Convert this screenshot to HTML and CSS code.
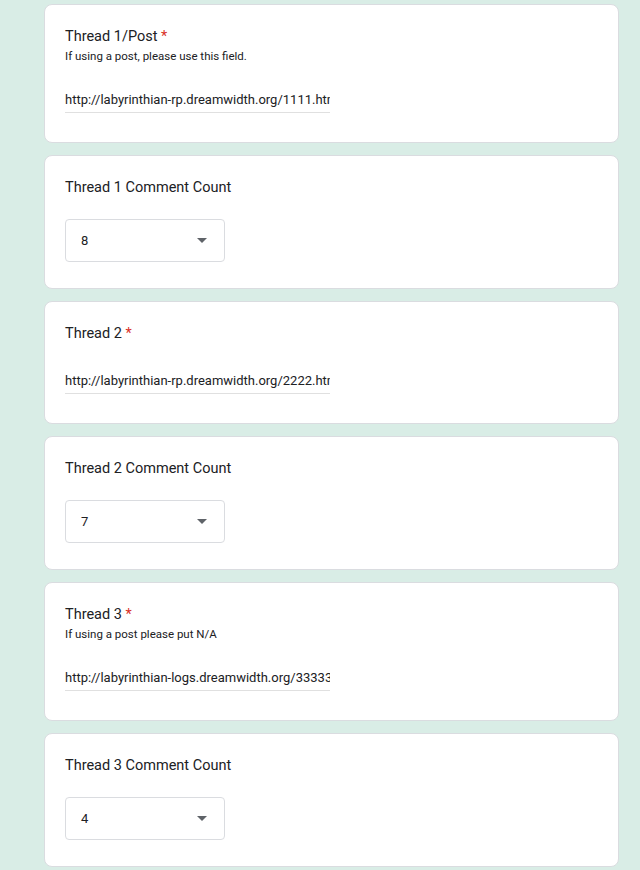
FILE: index.html
```html
<!DOCTYPE html>
<html lang="en">
<head>
  <meta charset="UTF-8" />
  <title>Thread Form</title>
  <link rel="stylesheet" href="styles.css">
</head>
<body>
  <main class="form">
    <div class="question">
      <div class="title">Thread 1/Post <span class="req">*</span></div>
      <div class="help">If using a post, please use this field.</div>
      <div class="text-field">
        <input type="text" value="http://labyrinthian-rp.dreamwidth.org/1111.html">
      </div>
    </div>

    <div class="question select-q">
      <div class="title">Thread 1 Comment Count</div>
      <div class="dropdown">
        <span>8</span>
        <span class="arrow"></span>
      </div>
    </div>

    <div class="question">
      <div class="title">Thread 2 <span class="req">*</span></div>
      <div class="text-field">
        <input type="text" value="http://labyrinthian-rp.dreamwidth.org/2222.html">
      </div>
    </div>

    <div class="question select-q">
      <div class="title">Thread 2 Comment Count</div>
      <div class="dropdown">
        <span>7</span>
        <span class="arrow"></span>
      </div>
    </div>

    <div class="question">
      <div class="title">Thread 3 <span class="req">*</span></div>
      <div class="help">If using a post please put N/A</div>
      <div class="text-field">
        <input type="text" value="http://labyrinthian-logs.dreamwidth.org/33333.html">
      </div>
    </div>

    <div class="question select-q">
      <div class="title">Thread 3 Comment Count</div>
      <div class="dropdown">
        <span>4</span>
        <span class="arrow"></span>
      </div>
    </div>
  </main>
</body>
</html>
```

FILE: styles.css
```css
body {
  font-family: Roboto, Arial, sans-serif;
  margin: 0;
  background: #d9ede6;
  color: #202124;
}

.form {
  width: 575px;
  margin-left: 44px;
  padding-top: 4px;
  display: flex;
  flex-direction: column;
  gap: 12px;
}

.question {
  background: white;
  border: 1px solid #dadce0;
  border-radius: 8px;
  padding: 20px 20px 29px;
}

.select-q {
  padding-bottom: 26px;
}

.title {
  font-size: 14.5px;
  line-height: 24px;
  color: #202124;
}

.req {
  color: #d93025;
}

.help {
  font-size: 11.5px;
  line-height: 18px;
  margin-top: -2px;
  margin-bottom: 2px;
  color: #202124;
}

.text-field {
  margin-top: 16px;
  width: 265px;
  height: 32px;
  border-bottom: 1px solid #e0e0e0;
  box-sizing: border-box;
}

.text-field input {
  border: none;
  outline: none;
  padding: 6px 0 0;
  margin: 0;
  width: 100%;
  height: 31px;
  box-sizing: border-box;
  font-family: Roboto, Arial, sans-serif;
  font-size: 13px;
  color: #202124;
  background: transparent;
}

.dropdown {
  margin-top: 19px;
  width: 160px;
  height: 43px;
  box-sizing: border-box;
  border: 1px solid #dadce0;
  border-radius: 4px;
  padding: 0 17px 0 15px;
  display: flex;
  align-items: center;
  justify-content: space-between;
  font-size: 13px;
}

.arrow {
  width: 0;
  height: 0;
  border-left: 5px solid transparent;
  border-right: 5px solid transparent;
  border-top: 5px solid #5f6368;
}
```
